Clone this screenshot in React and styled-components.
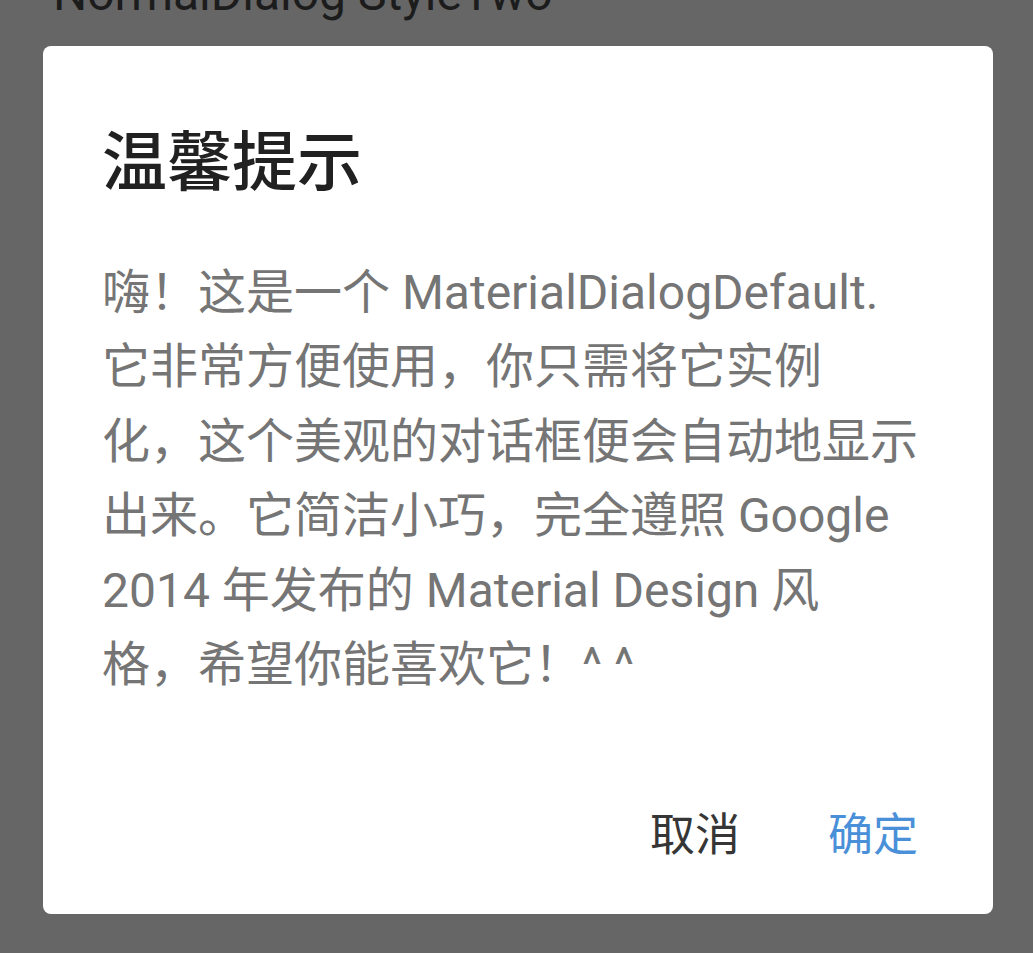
import React from "react";
import styled, { createGlobalStyle } from "styled-components";

const Global = createGlobalStyle`
  html, body {
    margin: 0;
    padding: 0;
    background: #666666;
    overflow: hidden;
  }
  body {
    font-family: Roboto, "Noto Sans CJK SC", sans-serif;
  }
`;

const Page = styled.div`
  width: 1033px;
  height: 953px;
  background: #666666;
  overflow: hidden;
  display: flex;
  flex-direction: column;
`;

const BackTitle = styled.div`
  margin-top: -30px;
  padding-left: 53px;
  font-family: Roboto, sans-serif;
  font-size: 48px;
  line-height: 48px;
  color: #1c1c1c;
  white-space: nowrap;
`;

const Dialog = styled.div`
  margin: 28px 0 0 43px;
  width: 950px;
  box-sizing: border-box;
  background: #ffffff;
  border-radius: 8px;
  padding: 72px 75px 52px 59px;
  display: flex;
  flex-direction: column;
`;

const Title = styled.h1`
  margin: 0;
  font-family: "Noto Sans CJK SC", Roboto, sans-serif;
  font-weight: 500;
  font-size: 65px;
  line-height: 79px;
  color: #212121;
`;

const Body = styled.div`
  margin-top: 59px;
  font-family: Roboto, "Noto Sans CJK SC", sans-serif;
  font-size: 48px;
  line-height: 74.4px;
  color: #757575;
`;

const Line = styled.div`
  white-space: nowrap;
`;

const Actions = styled.div`
  margin-top: 100px;
  display: flex;
  justify-content: flex-end;
  gap: 88px;
`;

const ActionButton = styled.button`
  border: none;
  background: none;
  padding: 0;
  margin: 0;
  font-family: "Noto Sans CJK SC", Roboto, sans-serif;
  font-size: 45px;
  line-height: 60px;
  color: ${(p) => (p.$primary ? "#4a90d9" : "#363636")};
  cursor: pointer;
`;

const lines = [
  "嗨！这是一个 MaterialDialogDefault.",
  "它非常方便使用，你只需将它实例",
  "化，这个美观的对话框便会自动地显示",
  "出来。它简洁小巧，完全遵照 Google",
  "2014 年发布的 Material Design 风",
  "格，希望你能喜欢它！^ ^",
];

export default function App() {
  return (
    <>
      <Global />
      <Page>
        <BackTitle>NormalDialog StyleTwo</BackTitle>
        <Dialog>
          <Title>温馨提示</Title>
          <Body>
            {lines.map((l, i) => (
              <Line key={i}>{l}</Line>
            ))}
          </Body>
          <Actions>
            <ActionButton>取消</ActionButton>
            <ActionButton $primary>确定</ActionButton>
          </Actions>
        </Dialog>
      </Page>
    </>
  );
}
